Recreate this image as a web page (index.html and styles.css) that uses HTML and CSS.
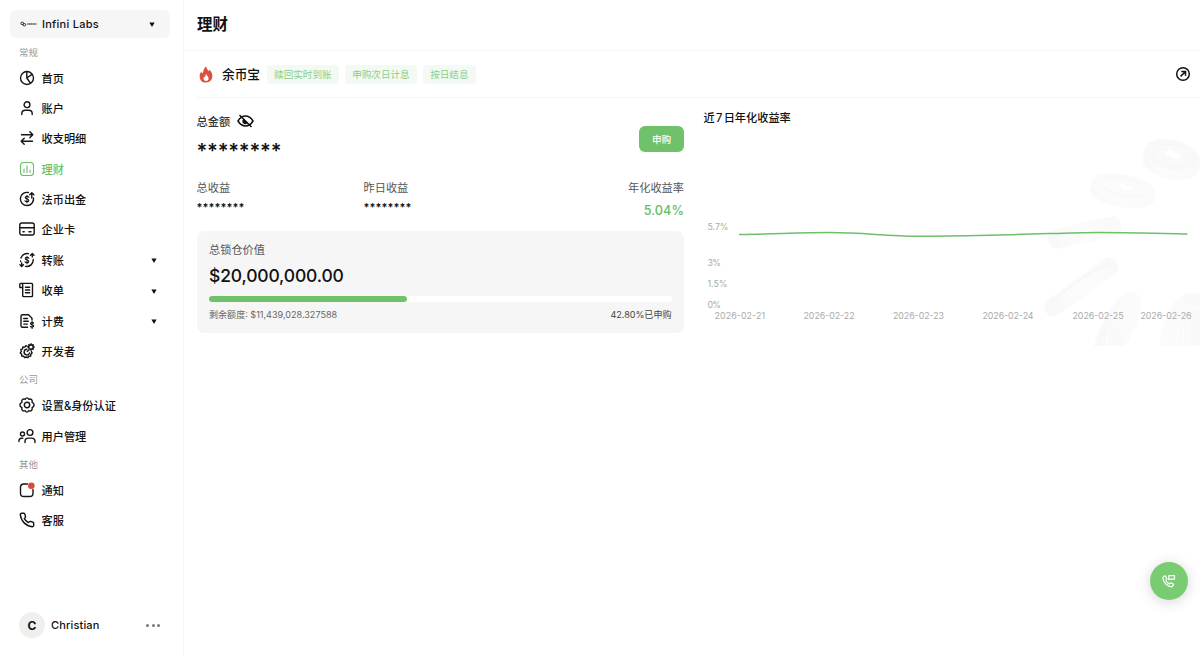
FILE: index.html
```html
<!DOCTYPE html>
<html lang="zh-CN">
<head>
<meta charset="utf-8">
<title>理财</title>
<link rel="stylesheet" href="styles.css">
</head>
<body>
<div class="app">
  <aside class="sidebar">
    <div class="workspace">
      <svg class="brand" viewBox="0 0 17 6"><ellipse cx="2.300" cy="2.400" rx="1.500" ry="1.200"/><ellipse cx="4.300" cy="3.700" rx="1.500" ry="1.200"/><path d="M7.300 3h9.200"/></svg>
      <span class="workspace-name">Infini Labs</span>
      <svg class="caret" viewBox="0 0 6 5"><path d="M.4.500h5.200L3.500 4.300q-.5.600-1 0z"/></svg>
    </div>
    <div class="section">常规</div>
    <nav class="menu">
      <a class="item"><svg class="icon" viewBox="0 0 16 16"><circle cx="8" cy="8" r="6.500"/><path d="M7.800 1.500V8l3.700 5.200M7.800 8l5.200-3.600"/></svg><span>首页</span></a>
      <a class="item"><svg class="icon" viewBox="0 0 16 16"><circle cx="8" cy="4.700" r="2.900"/><path d="M2.800 14.500v-.8q0-3.500 3.500-3.500h3.400q3.500 0 3.500 3.500v.8"/></svg><span>账户</span></a>
      <a class="item"><svg class="icon" viewBox="0 0 16 16"><path d="M2.500 4.800h11M10.800 1.800l3 3-3 3M13.500 11.200h-11M5.200 8.200l-3 3 3 3"/></svg><span>收支明细</span></a>
      <a class="item active"><svg class="icon thin" viewBox="0 0 16 16"><rect x="1.500" y="1.500" width="13" height="13" rx="3"/><path d="M5 8v3.500M8 5v6.500M11 9v2.500"/></svg><span>理财</span></a>
      <a class="item"><svg class="icon" viewBox="0 0 16 16"><path d="M9.300 1.500A6.600 6.600 0 1 0 14.500 7M12.800 7V1.800M10.700 3.800l2.100-2.100 2.100 2.100"/><path class="coin" d="M9.800 6.200q-.5-.9-1.900-.9-1.700 0-1.700 1.300 0 1.100 1.800 1.400t1.800 1.400q0 1.300-1.800 1.300-1.500 0-2-1M8 4.200v7.600"/></svg><span>法币出金</span></a>
      <a class="item"><svg class="icon" viewBox="0 0 16 16"><rect x=".8" y="2" width="14.400" height="12" rx="2"/><path d="M1 6.700h14M4 10.800h1.200M10 10.800h2"/></svg><span>企业卡</span></a>
      <a class="item"><svg class="icon" viewBox="0 0 16 16"><path d="M9.500 1.600A6.500 6.500 0 0 0 2 6M1.600 9v.5M6.500 14.400A6.500 6.500 0 0 0 14.200 7.500M13.300 5V1.800M11.500 3.200l1.800-1.600 1.700 1.600M2.700 11v3.300M1 12.800l1.700 1.600 1.700-1.600"/><path class="coin" d="M9.800 6.200q-.5-.9-1.900-.9-1.700 0-1.700 1.300 0 1.100 1.800 1.400t1.800 1.400q0 1.300-1.800 1.300-1.500 0-2-1M8 4.200v7.600"/></svg><span>转账</span><svg class="caret" viewBox="0 0 6 5"><path d="M.4.500h5.200L3.500 4.300q-.5.600-1 0z"/></svg></a>
      <a class="item"><svg class="icon" viewBox="0 0 16 16"><path d="M3.700 5.500H.8V2.300q0-.9.9-.9h11q.8 0 .8.900v11.500q0 .8-.8.800H4.500q-.8 0-.8-.8V3.200q0-1.800-1.500-1.800M6.500 5.300h4.200M6.500 8h4.200M6.500 10.700h4.200"/></svg><span>收单</span><svg class="caret" viewBox="0 0 6 5"><path d="M.4.500h5.200L3.500 4.300q-.5.600-1 0z"/></svg></a>
      <a class="item"><svg class="icon" viewBox="0 0 16 16"><path d="M8.500 14.300H3.500q-1.500 0-1.500-1.500V3.200q0-1.500 1.500-1.500h6L13 5.200V7M4.800 5.500h3.700M4.800 8.300h4.500M4.800 11.100h3.500"/><path class="coin" d="M14.600 10.200q-.4-.8-1.500-.8-1.600 0-1.600 1.200 0 1 1.600 1.200t1.600 1.300q0 1.200-1.600 1.200-1.300 0-1.700-.8M13.100 8.200v7.300"/></svg><span>计费</span><svg class="caret" viewBox="0 0 6 5"><path d="M.4.500h5.200L3.500 4.300q-.5.600-1 0z"/></svg></a>
      <a class="item"><svg class="icon" viewBox="0 0 16 16"><path d="M8 3.200l-1.200-.5-1 1.400-1.900-.2-.3 1.900-1.800.8.600 1.800L1.200 10l1.500 1.200v1.900l1.900.1 1 1.500 1.600-.7 1.700.7 1-1.500 1.800-.1.100-1.900 1.300-1.300-.7-1.300"/><path d="M8 6.300a2.800 2.800 0 1 0 2.600 3.600M8.200 8.400l1.700-1.500"/><circle cx="12" cy="4" r="2.300"/><path d="M12 .7v1M12 6.300v1M8.800 4h.8M14.400 4h.8M14.200 1.700l-.7.700M9.800 1.700l.7.700M14.200 6.300l-.7-.7"/></svg><span>开发者</span></a>
    </nav>
    <div class="section">公司</div>
    <nav class="menu">
      <a class="item"><svg class="icon" viewBox="0 0 16 16"><circle cx="8" cy="8" r="2.700"/><path d="M8 .9Q9 .9 9.700 2.300Q11.400 1.600 12.500 2.600T13.100 5.400Q15.100 6.300 15.100 8T13.100 10.600Q13.600 12.400 12.500 13.400T9.700 13.700Q9 15.100 8 15.100T6.300 13.700Q4.600 14.400 3.500 13.400T2.900 10.600Q.9 9.700.9 8T2.900 5.400Q2.400 3.600 3.500 2.600T6.300 2.300Q7 .9 8 .9z"/></svg><span>设置&amp;身份认证</span></a>
      <a class="item"><svg class="icon" viewBox="1 0 16 16"><circle cx="12" cy="4.500" r="2.900"/><path d="M7 14.500v-1q0-3.400 3.400-3.400h3.200q3.400 0 3.400 3.400v1"/><circle cx="4.500" cy="6" r="2"/><path d="M1 13.500v-.7q0-2.300 2.300-2.500h1.500"/></svg><span>用户管理</span></a>
    </nav>
    <div class="section">其他</div>
    <nav class="menu">
      <a class="item"><svg class="icon" viewBox="0 0 16 16"><path d="M8.500 2H4.800Q1.500 2 1.500 5.300v5.900q0 3.300 3.300 3.300h5.900q3.300 0 3.300-3.300V7.500"/><circle class="alert" cx="12.300" cy="3.700" r="3.300"/></svg><span>通知</span></a>
      <a class="item"><svg class="icon" viewBox="0 0 24 24"><path class="phone" d="M22 17v3a2 2 0 0 1-2.200 2A19.800 19.800 0 0 1 2 4.200 2 2 0 0 1 4 2h3a2 2 0 0 1 2 1.700c.1 1 .4 1.900.7 2.800a2 2 0 0 1-.5 2.100L8 9.900a16 16 0 0 0 6 6l1.300-1.200a2 2 0 0 1 2.100-.5c.9.300 1.800.6 2.800.7A2 2 0 0 1 22 17z"/></svg><span>客服</span></a>
    </nav>
    <div class="profile">
      <span class="avatar">C</span><span class="profile-name">Christian</span>
      <span class="dots"><i></i><i></i><i></i></span>
    </div>
  </aside>

  <main class="main">
    <header class="page-title">理财</header>
    <div class="product">
      <svg class="flame" viewBox="0 0 14 18"><path fill="#da5140" d="M7.200.5c.6 2.900 2 3.800 3.100 5.200.2-.7.100-1.300 0-2 2.300 1.800 3.400 4 3.400 7 0 4.100-2.700 6.800-6.700 6.800S.3 14.900.3 11c0-2.200.7-3.700 1.900-5.100.1 1 .4 1.700.9 2.200C4.700 5.900 4 2.500 7.200.500z"/><path fill="#fff" d="M7.200 8.500c.2 1.700 2.500 2.400 2.500 4.700 0 1.500-1 2.600-2.600 2.600s-2.700-1-2.700-2.600c0-1 .4-1.700.9-2.100.1.500.3.800.6 1 .6-.9.100-2.200 1.300-3.600z"/></svg>
      <h2>余币宝</h2>
      <span class="tag">赎回实时到账</span><span class="tag">申购次日计息</span><span class="tag">按日结息</span>
      <svg class="open" viewBox="0 0 16 16"><circle cx="8" cy="8" r="6.300"/><path d="M5.600 10.400L10 6M6.300 5.500h4.200v4.200"/></svg>
    </div>
    <div class="content">
      <section class="summary">
        <div class="balance">
          <div>
            <div class="balance-label">总金额
              <svg class="eye" viewBox="0 0 17 14"><path d="M1 7q3-5 7.500-5T16 7q-3 5-7.500 5T1 7z"/><path d="M7 4.500a3 3 0 1 0 4 4L8.500 7z" class="pupil"/><path d="M2.500 1l12 12"/></svg>
            </div>
            <div class="balance-value">********</div>
          </div>
          <button class="subscribe">申购</button>
        </div>
        <div class="stats">
          <div><div class="stat-label">总收益</div><div class="masked">********</div></div>
          <div><div class="stat-label">昨日收益</div><div class="masked">********</div></div>
          <div class="rate"><div class="stat-label">年化收益率</div><div class="rate-value">5.04%</div></div>
        </div>
        <div class="locked">
          <div class="locked-label">总锁仓价值</div>
          <div class="locked-value">$20,000,000.00</div>
          <div class="track"><div class="fill" style="width:42.8%"></div></div>
          <div class="quota"><span>剩余额度: <b>$11,439,028.327588</b></span><span class="sold">42.80%已申购</span></div>
        </div>
      </section>
      <section class="trend">
        <h3>近 7 日年化收益率</h3>
        <svg class="chart" viewBox="696 128 504 218">
          <defs>
            <linearGradient id="side" x1="0" x2="1"><stop stop-color="#f8f8f8"/><stop offset=".5" stop-color="#fcfcfc"/><stop offset="1" stop-color="#f9f9f9"/></linearGradient>
          </defs>
          <g fill="url(#side)" stroke="#fbfbfb">
            <g transform="rotate(13 1171 160)"><path d="M1143 155v8c0 21 57 21 57 0v-8"/><ellipse cx="1171" cy="155" rx="28" ry="15" fill="#f9f9f9"/><ellipse cx="1172" cy="155" rx="20" ry="10" fill="#fafafa" stroke="#f6f6f6"/><path d="M1163 153l6-4 4 3 5-1 3 4-6 4-5-3-4 2z" fill="#fff"/></g>
            <g transform="rotate(10 1123 190)"><path d="M1091 187v7c0 17 64 17 64 0v-7"/><ellipse cx="1123" cy="187" rx="32" ry="12" fill="#fafafa"/><ellipse cx="1124" cy="187" rx="23" ry="8" fill="#fbfbfb" stroke="#f7f7f7"/><path d="M1114 186l8-3 4 2 7 1-3 3-6 1-3-2z" fill="#fff"/></g>
            <g transform="rotate(-13 1085 234)"><rect x="1048" y="223" width="74" height="19" rx="7"/><path d="M1050 228q35-6 70 0"/></g>
            <g transform="rotate(-36 1081 287)"><rect x="1038" y="278" width="86" height="18" rx="8"/><path d="M1044 283q36-6 75 1" stroke="#f4f4f4" fill="#fbfbfb"/></g>
            <path d="M1094 346q12-38 31-53 13-3 17 9-3 23-18 44zM1160 346q7-49 30-53h10v53z"/>
            <path d="M1105 346q8-32 25-48M1175 346q5-34 25-40M1183 346v-15l5-6v21" fill="none" stroke="#fff"/>
          </g>
          <path class="line" d="M739 234.500C775 234 800 232.500 829 232.500C865 232.500 885 236.200 918 236.200C950 236.200 978 235.400 1008 234.800C1045 234 1070 232.400 1098 232.400C1130 232.400 1160 233.300 1187.500 234"/>
          <g class="axis">
            <text x="707.500" y="229.500" textLength="21">5.7%</text><text x="707.500" y="265.500" textLength="13.500">3%</text><text x="707.500" y="286.800" textLength="20">1.5%</text><text x="707.500" y="308" textLength="13.500">0%</text>
            <text x="714.500" y="318.500" textLength="50.500">2026-02-21</text><text x="803.500" y="318.500" textLength="51">2026-02-22</text><text x="893" y="318.500" textLength="51">2026-02-23</text><text x="982.500" y="318.500" textLength="51">2026-02-24</text><text x="1072.500" y="318.500" textLength="51">2026-02-25</text><text x="1140.500" y="318.500" textLength="51">2026-02-26</text>
          </g>
        </svg>
      </section>
    </div>
  </main>
  <button class="support" aria-label="客服"><svg viewBox="0 0 14 14"><path d="M1.200 3.200q1-1.700 2.400-1l1.300 2.500-1.100 1.400q.9 2.500 3.500 3.800l1.500-1.100 2.500 1.300q.5 1.400-1 2.300Q8 13.600 3.800 10 .2 6 1.200 3.200zM6.800 5.800V1.700h5.700v3.400H8z"/></svg></button>
</div>
</body>
</html>
```
FILE: styles.css
```css
* { box-sizing: border-box; }
body { margin: 0; background: #fff; color: #111; font-family: Inter, "Noto Sans CJK SC", sans-serif; }
.app { display: flex; width: 1200px; height: 655px; overflow: hidden; }

.sidebar { display: flex; flex-direction: column; width: 184px; flex: none; padding: 10px 13px 17px 10px; border-right: 1px solid #f5f5f5; }
.workspace { display: flex; align-items: center; width: 160px; height: 28px; flex: none; padding: 0 15px 0 10px; border-radius: 6px; background: #f6f6f6; }
.brand { width: 17px; height: 6px; margin-right: 5px; fill: none; stroke: #333; }
.brand path { stroke: #555; stroke-width: 1.600; stroke-dasharray: 1.400 .3; }
.workspace-name { font-size: 11px; font-weight: 500; letter-spacing: .25px; }
.caret { width: 6px; height: 5px; margin-left: auto; fill: #111; }
.item .caret { position: relative; top: 1px; }
.section { height: 24.600px; flex: none; padding: 4px 0 0 9px; color: #999; font-size: 9.500px; line-height: 22px; }
.menu + .section { padding-top: 3px; height: 24px; }
.menu { display: flex; flex-direction: column; }
.item { display: flex; align-items: center; height: 30.350px; padding: 0 13px 0 9px; font-size: 11.200px; font-weight: 500; }
.icon { width: 16px; height: 16px; margin-right: 6.500px; overflow: visible; fill: none; stroke: #151515; stroke-width: 1.400; stroke-linecap: round; stroke-linejoin: round; }
.coin { stroke-width: 1.100; }
.phone { stroke-width: 2.200; }
.alert { fill: #da4b3d; stroke: none; }
.active { color: #6abf66; }
.active .icon { stroke: #6abf66; }
.thin { stroke-width: 1.100; }
.profile { display: flex; align-items: center; margin-top: auto; padding: 0 10px 0 9px; }
.avatar { display: flex; align-items: center; justify-content: center; width: 26px; height: 26px; margin-right: 6px; border-radius: 50%; background: #efefef; font-size: 12px; font-weight: 700; }
.profile-name { font-size: 11px; font-weight: 500; letter-spacing: .15px; }
.dots { display: flex; gap: 2.500px; margin-left: auto; }
.dots i { width: 3px; height: 3px; border-radius: 50%; background: #777; }

.main { display: flex; flex-direction: column; flex: 1; min-width: 0; }
.page-title { height: 51px; padding: 0 13px; border-bottom: 1px solid #f6f6f6; font-size: 15.500px; font-weight: 700; line-height: 49px; }
.product { display: flex; align-items: center; height: 47px; margin-left: 13px; padding: 0 9px 0 2px; border-bottom: 1px solid #f6f6f6; }
.flame { width: 14px; height: 17px; margin-right: 9px; }
h2 { margin: -2px 7px 0 0; font-size: 12.700px; font-weight: 500; }
.tag { height: 19px; margin-top: 1px; margin-right: 6.500px; padding: 0 7px; border-radius: 3px; background: #f3faf3; color: #8bce88; font-size: 9.600px; line-height: 19px; }
.open { width: 16px; height: 16px; margin-left: auto; fill: none; stroke: #111; stroke-width: 1.500; }

.content { display: flex; }
.summary { width: 487.500px; margin-left: 12.500px; flex: none; }
.balance { display: flex; justify-content: space-between; height: 75px; padding-top: 14px; }
.balance-label { display: flex; align-items: center; height: 18px; gap: 7px; font-size: 11.200px; font-weight: 500; color: #333; }
.eye { width: 17px; height: 14px; fill: none; stroke: #111; stroke-width: 1.500; }
.pupil { fill: #111; stroke: none; }
.balance-value { margin-top: 9px; font: 600 20px/24px Inter, sans-serif; letter-spacing: -.2px; }
.subscribe { width: 45px; height: 26px; margin-top: 14px; padding: 0 0 1px; border: 0; border-radius: 6px; background: #6fc269; color: #fff; font: 500 9.600px "Noto Sans CJK SC", sans-serif; }
.stats { display: grid; grid-template-columns: 167px 160px 160.500px; height: 58px; padding-top: 6px; }
.stat-label { height: 18px; color: #555; font-size: 11.200px; line-height: 18px; }
.masked { margin-top: 2px; font-size: 11px; font-weight: 600; line-height: 17px; letter-spacing: .08px; }
.rate { text-align: right; }
.rate-value { margin-top: 5px; color: #65bd62; font: 500 12.700px/18px Inter, sans-serif; }
.locked { height: 102px; padding: 10px 12.500px 0; border-radius: 7px; background: #f6f6f6; }
.locked-label { height: 18px; color: #555; font-size: 11.200px; line-height: 18px; }
.locked-value { height: 27px; padding-top: 5px; font: 500 17.500px/24px Inter, sans-serif; letter-spacing: -.15px; white-space: nowrap; }
.track { height: 6px; margin-top: 10px; border-radius: 3px; background: #fff; }
.fill { height: 100%; border-radius: 3px; background: #6fc269; }
.quota { display: flex; justify-content: space-between; padding-top: 4px; color: #666; font: 9.050px/18px Inter, "Noto Sans CJK SC", sans-serif; }
.quota b { font-weight: 400; }
.sold { color: #444; }

.trend { flex: 1; min-width: 0; padding-left: 12px; }
h3 { height: 30px; margin: 0; padding: 11px 0 0 7.500px; font-size: 11.200px; font-weight: 500; line-height: 18px; word-spacing: -1.700px; }
.chart { display: block; width: 504px; height: 218px; }
.line { fill: none; stroke: #70be6a; stroke-width: 1.500; }
.axis { fill: #aaa; font: 8.800px Inter, sans-serif; }
.support { position: absolute; left: 1150px; top: 562px; display: flex; align-items: center; justify-content: center; width: 38px; height: 38px; padding: 0; border: 0; border-radius: 50%; background: #7acc73; box-shadow: 0 2px 14px rgba(0, 0, 0, .16); }
.support svg { width: 14px; height: 14px; fill: none; stroke: #fff; stroke-width: 1.200; stroke-linejoin: round; }
```
